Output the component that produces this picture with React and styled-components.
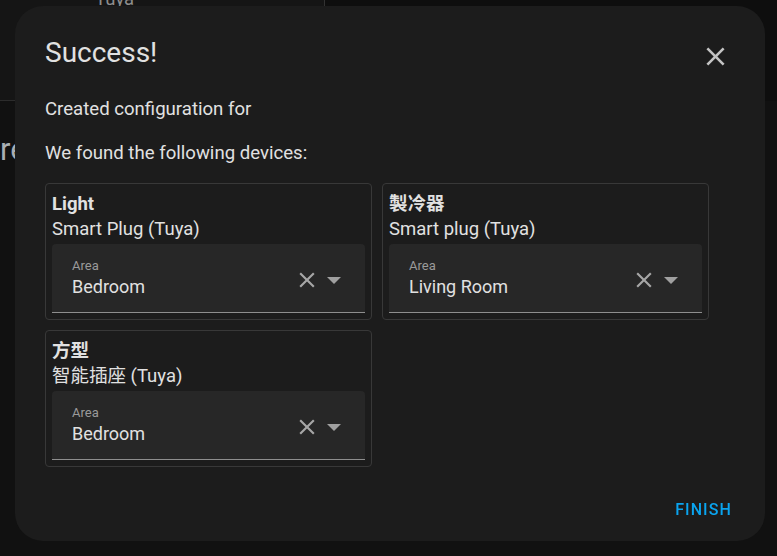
import React from "react";
import styled, { createGlobalStyle } from "styled-components";

const GlobalStyle = createGlobalStyle`
  html, body { margin: 0; padding: 0; }
  body {
    background: #111111;
    font-family: Roboto, "Noto Sans CJK TC", "Noto Sans CJK SC", sans-serif;
    overflow: hidden;
  }
  * { box-sizing: border-box; }
`;

const Page = styled.div`
  width: 777px;
  height: 556px;
  background: #111111;
  display: flex;
  flex-direction: column;
`;

const TopRow = styled.div`
  display: flex;
  height: 101px;
`;

const SidePanel = styled.div`
  width: 325px;
  background: #151515;
  border-right: 1px solid #323232;
  border-bottom: 1px solid #2c2c2c;
  padding-left: 95px;
  overflow: hidden;
`;

const PanelText = styled.div`
  margin-top: -13px;
  font-size: 18.5px;
  line-height: 25px;
  color: #8d8d8d;
`;

const Filler = styled.div`
  flex: 1;
  background: #0e0e0e;
`;

const PageHeading = styled.div`
  margin-top: 29px;
  font-size: 31px;
  line-height: 40px;
  color: #a9aeb3;
`;

const Overlay = styled.div`
  position: fixed;
  inset: 0;
  padding: 6px 0 0 15px;
`;

const Dialog = styled.div`
  width: 750px;
  height: 535px;
  background: #1c1c1c;
  border-radius: 28px;
  padding: 0 30px;
  display: flex;
  flex-direction: column;
  color: #e1e1e1;
`;

const Header = styled.div`
  display: flex;
  justify-content: space-between;
  align-items: flex-start;
  padding-top: 29px;
`;

const Title = styled.h2`
  margin: 0;
  font-size: 28px;
  font-weight: 400;
  line-height: 36px;
  color: #e1e1e1;
`;

const IconButton = styled.button`
  width: 40px;
  height: 40px;
  margin-top: 1px;
  padding: 0;
  border: none;
  background: transparent;
  display: flex;
  align-items: center;
  justify-content: center;
  color: ${(p) => p.$color || "#c4c4c4"};
  cursor: pointer;
`;

const Text = styled.p`
  margin: ${(p) => p.$mt}px 0 0;
  font-size: 18.6px;
  line-height: 26px;
  color: #e1e1e1;
`;

const Grid = styled.div`
  margin-top: 17px;
  display: grid;
  grid-template-columns: repeat(2, 327px);
  gap: 10px;
`;

const Card = styled.div`
  border: 1px solid #383838;
  border-radius: 4px;
  padding: 8px 6px 6px;
`;

const CardName = styled.div`
  font-size: 18.5px;
  line-height: 25px;
  font-weight: ${(p) => (p.$bold ? 700 : 400)};
  color: #e1e1e1;
`;

const Field = styled.div`
  margin-top: 2px;
  height: 69px;
  background: #272727;
  border-radius: 4px 4px 0 0;
  border-bottom: 1px solid #8e8e8e;
  display: flex;
  align-items: flex-start;
  padding: 0 24px 0 20px;
`;

const FieldText = styled.div`
  flex: 1;
  padding-top: 14px;
  display: flex;
  flex-direction: column;
`;

const FieldLabel = styled.span`
  font-size: 13px;
  line-height: 16px;
  color: #9a9a9a;
`;

const FieldValue = styled.span`
  margin-top: 1px;
  font-size: 18px;
  line-height: 24px;
  color: #e1e1e1;
`;

const FieldIcons = styled.div`
  display: flex;
  align-items: center;
  gap: 7px;
  margin-top: 23px;
`;

const ClearIcon = styled.span`
  display: flex;
  color: #a6a6a6;
`;

const Arrow = styled.span`
  display: flex;
  color: #a0a0a0;
`;

const Actions = styled.div`
  margin-top: auto;
  display: flex;
  justify-content: flex-end;
  padding-bottom: 13px;
`;

const TextButton = styled.button`
  height: 36px;
  border: none;
  background: transparent;
  padding: 0 3px 0 5px;
  font-family: Roboto, sans-serif;
  font-weight: 500;
  font-size: 16px;
  line-height: 36px;
  letter-spacing: 1.1px;
  color: #0aa4ef;
  cursor: pointer;
`;

const CloseSvg = ({ size }) => (
  <svg width={size} height={size} viewBox="0 0 24 24" fill="currentColor">
    <path d="M19,6.41L17.59,5L12,10.59L6.41,5L5,6.41L10.59,12L5,17.59L6.41,19L12,13.41L17.59,19L19,17.59L13.41,12L19,6.41Z" />
  </svg>
);

const MenuDown = () => (
  <svg width="14" height="7" viewBox="0 0 14 7" fill="currentColor">
    <path d="M0,0L14,0L7,7Z" />
  </svg>
);

const devices = [
  { name: "Light", model: "Smart Plug (Tuya)", area: "Bedroom" },
  { name: "製冷器", model: "Smart plug (Tuya)", area: "Living Room" },
  { name: "方型", model: "智能插座 (Tuya)", area: "Bedroom" },
];

export default function App() {
  return (
    <>
      <GlobalStyle />
      <Page>
        <TopRow>
          <SidePanel>
            <PanelText>Tuya</PanelText>
          </SidePanel>
          <Filler />
        </TopRow>
        <PageHeading>re</PageHeading>
      </Page>
      <Overlay>
        <Dialog>
          <Header>
            <Title>Success!</Title>
            <IconButton aria-label="Close">
              <CloseSvg size={31} />
            </IconButton>
          </Header>
          <Text $mt={20}>Created configuration for</Text>
          <Text $mt={18}>We found the following devices:</Text>
          <Grid>
            {devices.map((d, i) => (
              <Card key={i}>
                <CardName $bold>{d.name}</CardName>
                <CardName>{d.model}</CardName>
                <Field>
                  <FieldText>
                    <FieldLabel>Area</FieldLabel>
                    <FieldValue>{d.area}</FieldValue>
                  </FieldText>
                  <FieldIcons>
                    <ClearIcon>
                      <CloseSvg size={26} />
                    </ClearIcon>
                    <Arrow>
                      <MenuDown />
                    </Arrow>
                  </FieldIcons>
                </Field>
              </Card>
            ))}
          </Grid>
          <Actions>
            <TextButton>FINISH</TextButton>
          </Actions>
        </Dialog>
      </Overlay>
    </>
  );
}
